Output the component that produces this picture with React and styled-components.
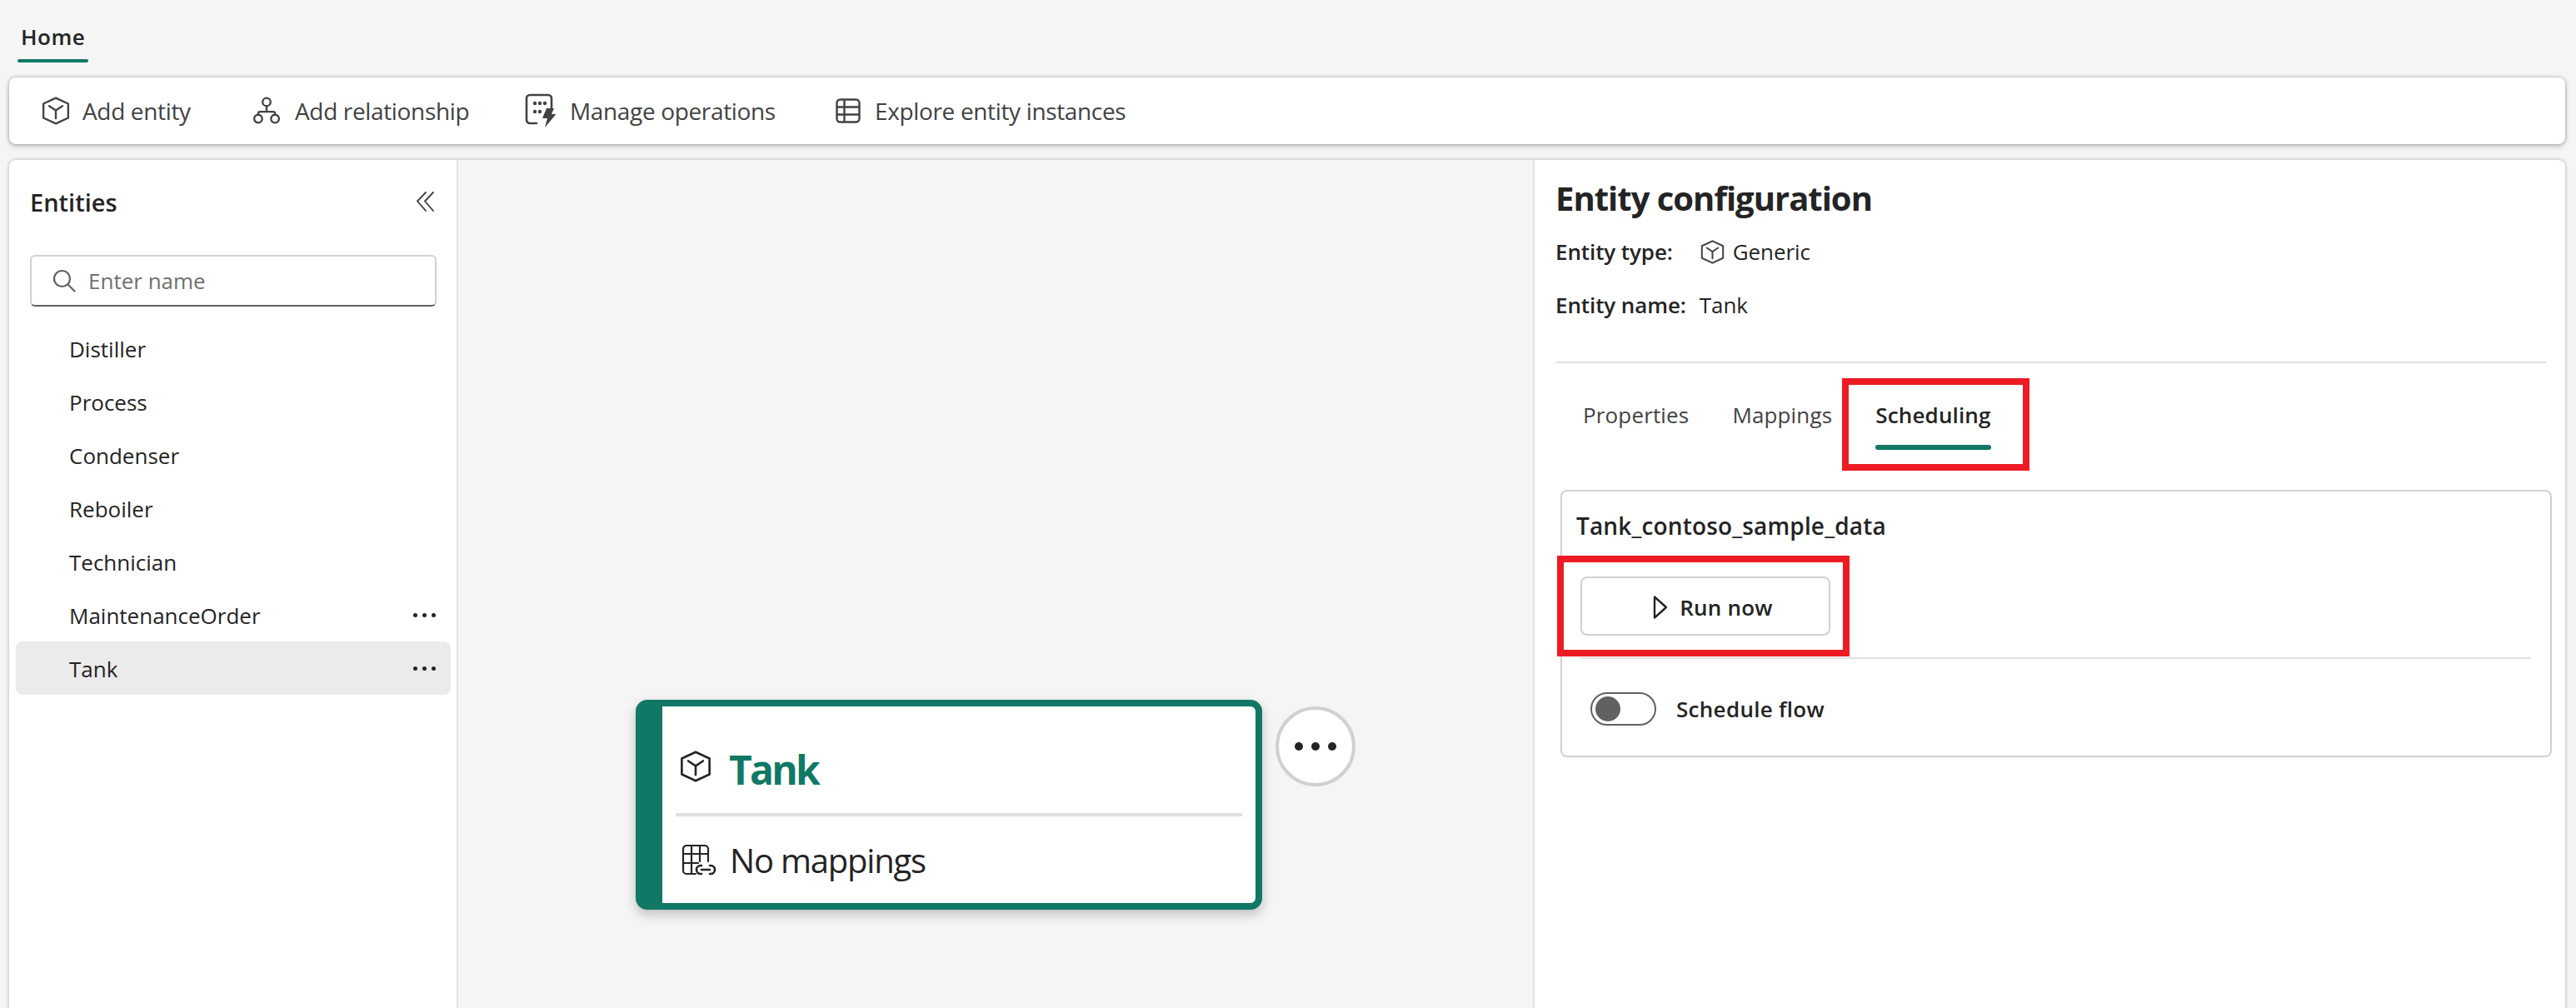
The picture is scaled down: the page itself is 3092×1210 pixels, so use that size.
import React from 'react';
import styled, { createGlobalStyle } from 'styled-components';

const GlobalStyle = createGlobalStyle`
  html, body {
    margin: 0;
    padding: 0;
    background: #f5f5f5;
  }
  * {
    box-sizing: border-box;
  }
`;

const FONT = '"Open Sans", "Noto Sans", "Liberation Sans", sans-serif';
const GREEN = '#117865';

function CubeIcon({ size = 34, color = '#424242' }) {
  return (
    <svg width={size} height={size} viewBox="0 0 32 32" fill="none" stroke={color} strokeWidth="2.2" strokeLinejoin="round" strokeLinecap="round">
      <path d="M16 1.5 30 8V24L16 30.5 2 24V8Z" />
      <path d="M8.5 10.5 16 15.5 23.5 10.5M16 15.5V24.5" />
    </svg>
  );
}

function BranchIcon() {
  return (
    <svg width="34" height="34" viewBox="0 0 32 32" fill="none" stroke="#424242" strokeWidth="2.2" strokeLinecap="round">
      <circle cx="16" cy="6" r="4.5" />
      <path d="M16 10.5V17M6.5 20.5V19a2 2 0 0 1 2-2h15a2 2 0 0 1 2 2v1.5" />
      <circle cx="6.5" cy="25" r="4.5" />
      <circle cx="25.5" cy="25" r="4.5" />
    </svg>
  );
}

function OperationsIcon() {
  return (
    <svg width="38" height="42" viewBox="0 0 38 42" fill="none">
      <path d="M14 36H6a4 4 0 0 1-4-4V6a4 4 0 0 1 4-4h22a4 4 0 0 1 4 4v11" stroke="#424242" strokeWidth="2.6" strokeLinecap="round" />
      <g fill="#424242">
        <circle cx="12" cy="12" r="2.2" />
        <circle cx="18" cy="12" r="2.2" />
        <circle cx="24" cy="12" r="2.2" />
        <circle cx="12" cy="22" r="2.2" />
        <circle cx="18" cy="22" r="2.2" />
        <path d="M26 18h9l-3 7h5.5L24 41l3-11h-6Z" />
      </g>
    </svg>
  );
}

function GridIcon() {
  return (
    <svg width="30" height="30" viewBox="0 0 30 30" fill="none" stroke="#424242" strokeWidth="2.4">
      <rect x="1.5" y="1.5" width="27" height="27" rx="4" />
      <path d="M1.5 10.5h27M1.5 19.5h27M10.5 1.5v27" />
    </svg>
  );
}

function MappingIcon() {
  return (
    <svg width="42" height="38" viewBox="0 0 42 38" fill="none" stroke="#242424" strokeWidth="2.2" strokeLinecap="round">
      <path d="M17 36H6a4 4 0 0 1-4-4V6a4 4 0 0 1 4-4h22a4 4 0 0 1 4 4v15" />
      <path d="M2 12h30M2 23h18M12 2v34M22 2v19" />
      <path d="M24 26h-1a5 5 0 0 0 0 10h1M34 26h1a5 5 0 0 1 0 10h-1M24 31h10" strokeWidth="2.6" />
    </svg>
  );
}

function SearchIcon() {
  return (
    <svg width="28" height="28" viewBox="0 0 28 28" fill="none" stroke="#616161" strokeWidth="2.2" strokeLinecap="round">
      <circle cx="11.5" cy="11.5" r="9.5" />
      <path d="M18.5 18.5 26.5 26.5" />
    </svg>
  );
}

function CollapseIcon() {
  return (
    <svg width="22" height="26" viewBox="0 0 22 26" fill="none" stroke="#424242" strokeWidth="1.9" strokeLinecap="round" strokeLinejoin="round">
      <path d="M12 2 2 12.5 12 24M21 2 11 12.5 21 24" />
    </svg>
  );
}

function PlayIcon() {
  return (
    <svg width="20" height="30" viewBox="0 0 20 30" fill="none" stroke="#242424" strokeWidth="2.4" strokeLinejoin="round">
      <path d="M3 2.5 17 15 3 27.5Z" />
    </svg>
  );
}

function Dots() {
  return (
    <DotsRow>
      <i />
      <i />
      <i />
    </DotsRow>
  );
}

const ENTITIES = ['Distiller', 'Process', 'Condenser', 'Reboiler', 'Technician', 'MaintenanceOrder', 'Tank'];
const TOOLBAR = [
  { label: 'Add entity', icon: <CubeIcon />, gap: 15, width: 253 },
  { label: 'Add relationship', icon: <BranchIcon />, gap: 17, width: 327 },
  { label: 'Manage operations', icon: <OperationsIcon />, gap: 16, width: 373 },
  { label: 'Explore entity instances', icon: <GridIcon />, gap: 17, width: 360 },
];

export default function App() {
  return (
    <>
      <GlobalStyle />
      <Page>
        <TopTabs>
          <TopTab>Home</TopTab>
        </TopTabs>

        <Toolbar>
          {TOOLBAR.map((item) => (
            <ToolbarItem key={item.label} $gap={item.gap} $width={item.width}>
              {item.icon}
              <span>{item.label}</span>
            </ToolbarItem>
          ))}
        </Toolbar>

        <Main>
          <Sidebar>
            <SidebarHeader>
              <SidebarTitle>Entities</SidebarTitle>
              <CollapseIcon />
            </SidebarHeader>
            <SearchBox>
              <SearchIcon />
              <span>Enter name</span>
            </SearchBox>
            <EntityList>
              {ENTITIES.map((name, i) => (
                <EntityRow key={name} $selected={name === 'Tank'}>
                  <span>{name}</span>
                  {i >= 5 && <Dots />}
                </EntityRow>
              ))}
            </EntityList>
          </Sidebar>

          <Canvas>
            <NodeCard>
              <NodeHead>
                <CubeIcon size={38} color="#242424" />
                <NodeTitle>Tank</NodeTitle>
              </NodeHead>
              <NodeFoot>
                <MappingIcon />
                <span>No mappings</span>
              </NodeFoot>
            </NodeCard>
            <NodeMenu>
              <i />
              <i />
              <i />
            </NodeMenu>
          </Canvas>

          <ConfigPanel>
            <ConfigTitle>Entity configuration</ConfigTitle>
            <MetaRow>
              <MetaLabel>Entity type:</MetaLabel>
              <MetaValue $left={33}>
                <CubeIcon size={29} />
                Generic
              </MetaValue>
            </MetaRow>
            <MetaRow $second>
              <MetaLabel>Entity name:</MetaLabel>
              <MetaValue $left={16}>Tank</MetaValue>
            </MetaRow>
            <Rule />
            <Tabs>
              <Tab>Properties</Tab>
              <Tab>Mappings</Tab>
              <Tab $active>
                Scheduling
                <TabHighlight />
              </Tab>
            </Tabs>
            <ScheduleCard>
              <ScheduleName>Tank_contoso_sample_data</ScheduleName>
              <RunButton>
                <PlayIcon />
                Run now
                <ButtonHighlight />
              </RunButton>
              <CardRule />
              <ToggleRow>
                <Toggle>
                  <ToggleThumb />
                </Toggle>
                <span>Schedule flow</span>
              </ToggleRow>
            </ScheduleCard>
          </ConfigPanel>
        </Main>
      </Page>
    </>
  );
}

const Page = styled.div`
  width: 3092px;
  height: 1210px;
  overflow: hidden;
  padding: 0 13px 0 11px;
  background: #f5f5f5;
  font-family: ${FONT};
  color: #242424;
`;

const TopTabs = styled.div`
  display: flex;
  height: 93px;
  padding: 26px 0 0 10px;
`;

const TopTab = styled.div`
  position: relative;
  height: 49px;
  padding: 0 4px;
  font-size: 26px;
  font-weight: 600;
  line-height: 36px;
  letter-spacing: 0.5px;

  &::after {
    content: '';
    position: absolute;
    left: 0;
    right: 0;
    bottom: 0;
    height: 4px;
    border-radius: 2px;
    background: ${GREEN};
  }
`;

const Toolbar = styled.div`
  display: flex;
  align-items: center;
  height: 80px;
  padding-left: 39px;
  background: #fff;
  border-radius: 8px;
  box-shadow: 0 0 4px rgba(0, 0, 0, 0.3), 0 3px 6px rgba(0, 0, 0, 0.16);
`;

const ToolbarItem = styled.div`
  display: flex;
  align-items: center;
  gap: ${({ $gap }) => $gap}px;
  width: ${({ $width }) => $width}px;
  font-size: 28px;
  font-weight: 500;
  letter-spacing: -0.35px;
  color: #424242;
  white-space: nowrap;
`;

const Main = styled.div`
  display: flex;
  height: 1100px;
  margin-top: 19px;
  background: #fff;
  border-radius: 8px 8px 0 0;
  box-shadow: 0 0 4px rgba(0, 0, 0, 0.3);
  overflow: hidden;
`;

const Sidebar = styled.aside`
  width: 539px;
  flex: none;
  padding: 0 7px 0 8px;
  border-right: 2px solid #e4e4e4;
`;

const SidebarHeader = styled.div`
  display: flex;
  align-items: center;
  justify-content: space-between;
  height: 100px;
  padding: 0 20px 0 17px;
`;

const SidebarTitle = styled.h2`
  margin: 0;
  font-size: 29px;
  font-weight: 600;
`;

const SearchBox = styled.div`
  display: flex;
  align-items: center;
  gap: 15px;
  width: 488px;
  height: 62px;
  margin: 14px 0 18px 17px;
  padding: 0 0 0 25px;
  border: 2px solid #d1d1d1;
  border-bottom-color: #616161;
  border-radius: 6px;
  font-size: 26px;
  color: #707070;
`;

const EntityList = styled.div`
  display: flex;
  flex-direction: column;
`;

const EntityRow = styled.div`
  display: flex;
  align-items: center;
  justify-content: space-between;
  height: 64px;
  padding: 1px 18px 0 64px;
  border-radius: 8px;
  font-size: 26px;
  color: #242424;
  background: ${({ $selected }) => ($selected ? '#ebebeb' : 'transparent')};
`;

const DotsRow = styled.span`
  display: flex;
  gap: 6px;

  i {
    width: 5px;
    height: 5px;
    border-radius: 50%;
    background: #242424;
  }
`;

const Canvas = styled.section`
  position: relative;
  flex: 1;
  background: #f5f5f5;
`;

const NodeCard = styled.div`
  position: absolute;
  left: 213px;
  top: 648px;
  width: 752px;
  height: 252px;
  padding: 0 16px;
  border-style: solid;
  border-color: ${GREEN};
  border-width: 8px 8px 8px 32px;
  border-radius: 14px;
  background: #fff;
  box-shadow: 0 6px 14px rgba(0, 0, 0, 0.22);
`;

const NodeHead = styled.div`
  display: flex;
  align-items: center;
  gap: 21px;
  height: 132px;
  padding: 22px 0 0 5px;
  border-bottom: 4px solid #e0e0e0;

  svg {
    margin-top: -6px;
  }
`;

const NodeTitle = styled.span`
  font-size: 48px;
  font-weight: 700;
  letter-spacing: -2.8px;
  color: ${GREEN};
`;

const NodeFoot = styled.div`
  display: flex;
  align-items: center;
  gap: 16px;
  height: 104px;
  padding: 0 0 0 7px;
  font-size: 40px;
  letter-spacing: -1.2px;
  color: #242424;
`;

const NodeMenu = styled.div`
  position: absolute;
  left: 981px;
  top: 656px;
  display: flex;
  align-items: center;
  justify-content: center;
  gap: 10px;
  width: 96px;
  height: 96px;
  border: 4px solid #d1d1d1;
  border-radius: 50%;
  background: #fff;

  i {
    width: 10px;
    height: 10px;
    border-radius: 50%;
    background: #242424;
  }
`;

const ConfigPanel = styled.section`
  width: 1239px;
  flex: none;
  padding: 0 23px 0 25px;
  border-left: 2px solid #e4e4e4;
`;

const ConfigTitle = styled.h1`
  margin: 0;
  padding-top: 20px;
  height: 90px;
  font-size: 40px;
  font-weight: 700;
  line-height: 52px;
  letter-spacing: -1px;
  color: #242424;
`;

const MetaRow = styled.div`
  display: flex;
  align-items: center;
  height: 40px;
  margin-top: ${({ $second }) => ($second ? '24px' : '0')};
  font-size: 26px;
  letter-spacing: -0.1px;
`;

const MetaLabel = styled.span`
  font-weight: 600;
`;

const MetaValue = styled.span`
  display: flex;
  align-items: center;
  gap: 10px;
  margin-left: ${({ $left }) => $left}px;
`;

const Rule = styled.div`
  height: 2px;
  margin-top: 48px;
  background: #e0e0e0;
`;

const Tabs = styled.div`
  display: flex;
  gap: 52px;
  height: 152px;
  padding: 44px 0 0 33px;
`;

const Tab = styled.div`
  position: relative;
  height: 60px;
  font-size: 26px;
  font-weight: ${({ $active }) => ($active ? 600 : 400)};
  line-height: 36px;
  letter-spacing: 0.15px;
  color: ${({ $active }) => ($active ? '#242424' : '#424242')};

  ${({ $active }) =>
    $active &&
    `&::after {
      content: '';
      position: absolute;
      left: 0;
      right: 0;
      bottom: 0;
      height: 6px;
      border-radius: 3px;
      background: ${GREEN};
    }`}
`;

const TabHighlight = styled.span`
  position: absolute;
  left: -40px;
  right: -46px;
  top: -26px;
  bottom: -25px;
  border: 8px solid #ed1c24;
`;

const ScheduleCard = styled.div`
  width: 1190px;
  height: 321px;
  margin-left: 6px;
  padding: 0 23px 0 22px;
  border: 2px solid #d1d1d1;
  border-radius: 8px;
`;

const ScheduleName = styled.div`
  height: 102px;
  margin-left: -5px;
  padding-top: 23px;
  font-size: 28px;
  font-weight: 600;
  line-height: 36px;
  letter-spacing: 0.15px;
`;

const RunButton = styled.div`
  position: relative;
  display: flex;
  align-items: center;
  justify-content: center;
  gap: 13px;
  width: 300px;
  height: 71px;
  padding: 2px 0 0 17px;
  border: 2px solid #d1d1d1;
  border-radius: 8px;
  font-size: 26px;
  font-weight: 600;
  letter-spacing: 0.2px;
`;

const ButtonHighlight = styled.span`
  position: absolute;
  left: -30px;
  right: -25px;
  top: -27px;
  bottom: -27px;
  border: 8px solid #ed1c24;
`;

const CardRule = styled.div`
  height: 2px;
  margin-top: 26px;
  background: #e0e0e0;
`;

const ToggleRow = styled.div`
  display: flex;
  align-items: center;
  gap: 24px;
  height: 120px;
  padding: 0 0 0 12px;
  font-size: 26px;
  font-weight: 600;
  letter-spacing: 0.3px;
`;

const Toggle = styled.span`
  display: flex;
  align-items: center;
  width: 79px;
  height: 40px;
  padding-left: 4px;
  border: 2px solid #616161;
  border-radius: 20px;
`;

const ToggleThumb = styled.span`
  width: 30px;
  height: 30px;
  border-radius: 50%;
  background: #616161;
`;
